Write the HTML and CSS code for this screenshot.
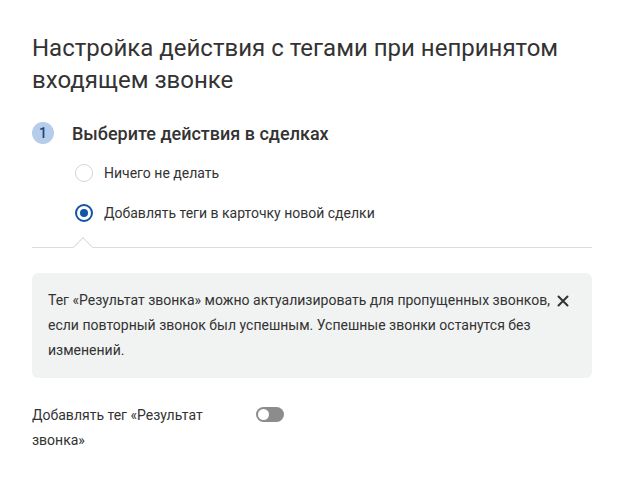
FILE: index.html
```html
<!DOCTYPE html>
<html lang="ru">
<head>
<meta charset="utf-8">
<link rel="stylesheet" href="styles.css">
</head>
<body>
<div class="page">
  <h1 class="title">Настройка действия с тегами при непринятом входящем звонке</h1>
  <div class="step">
    <span class="step-num">1</span>
    <span class="step-label">Выберите действия в сделках</span>
  </div>
  <div class="radios">
    <label class="radio"><span class="radio-dot"></span><span>Ничего не делать</span></label>
    <label class="radio"><span class="radio-dot checked"></span><span>Добавлять теги в карточку новой сделки</span></label>
  </div>
  <div class="divider"><span class="caret"></span></div>
  <div class="info">
    <p class="info-text">Тег «Результат звонка» можно актуализировать для пропущенных звонков, если повторный звонок был успешным. Успешные звонки останутся без изменений.</p>
    <svg class="close" width="12" height="12" viewBox="0 0 12 12"><path d="M1.5 1.5L10.5 10.5M10.5 1.5L1.5 10.5" stroke="#333" stroke-width="2" stroke-linecap="round"/></svg>
  </div>
  <div class="toggle-row">
    <span class="toggle-label">Добавлять тег «Результат звонка»</span>
    <span class="toggle"><span class="knob"></span></span>
  </div>
</div>
</body>
</html>
```
FILE: styles.css
```css
* { box-sizing: border-box; }
body {
  margin: 0;
  background: #fff;
  font-family: Roboto, "Noto Sans", sans-serif;
  color: #333;
}
.page {
  padding: 32px 32px 0 32px;
  width: 624px;
}
.title {
  margin: 0;
  font-size: 24px;
  line-height: 32px;
  font-weight: 400;
  color: #333;
  width: 560px;
}
.step {
  display: flex;
  align-items: center;
  margin-top: 25px;
  height: 24px;
}
.step-num {
  width: 22px;
  height: 22px;
  border-radius: 50%;
  background: #b5cdea;
  color: #1e437a;
  font-size: 14px;
  font-weight: 500;
  display: flex;
  align-items: center;
  justify-content: center;
}
.step-label {
  margin-left: 18px;
  font-size: 18px;
  font-weight: 500;
  color: #333;
}
.radios {
  padding-left: 43px;
  margin-top: 16px;
  display: flex;
  flex-direction: column;
  gap: 16px;
}
.radio {
  display: flex;
  align-items: center;
  font-size: 14px;
  line-height: 24px;
  color: #333;
}
.radio-dot {
  width: 18px;
  height: 18px;
  border-radius: 50%;
  border: 1px solid #d6d6d6;
  margin-right: 11px;
  position: relative;
}
.radio-dot.checked {
  border: 2px solid #1354a5;
}
.radio-dot.checked::after {
  content: "";
  position: absolute;
  left: 3px;
  top: 3px;
  width: 8px;
  height: 8px;
  border-radius: 50%;
  background: #1354a5;
}
.divider {
  position: relative;
  margin-top: 22px;
  height: 1px;
  background: #dcdcdc;
  width: 560px;
}
.caret {
  position: absolute;
  left: 44px;
  top: -7px;
  width: 14px;
  height: 14px;
  background: #fff;
  border-left: 1px solid #dcdcdc;
  border-top: 1px solid #dcdcdc;
  transform: rotate(45deg);
}
.info {
  margin-top: 25px;
  width: 560px;
  background: #f1f2f2;
  border-radius: 6px;
  padding: 15px 23px 15px 16px;
  display: flex;
  align-items: flex-start;
}
.info-text {
  margin: 0;
  font-size: 14px;
  line-height: 25px;
  color: #333;
  flex: 1;
}
.close {
  margin-top: 7px;
  margin-left: 2px;
  flex: none;
}
.toggle-row {
  margin-top: 25px;
  display: flex;
  align-items: flex-start;
}
.toggle-label {
  width: 200px;
  font-size: 14px;
  line-height: 25px;
  color: #333;
}
.toggle {
  margin-left: 24px;
  margin-top: 4px;
  width: 28px;
  height: 15px;
  border-radius: 8px;
  background: #8c8c8c;
  position: relative;
}
.knob {
  position: absolute;
  left: 2px;
  top: 2px;
  width: 11px;
  height: 11px;
  border-radius: 50%;
  background: #fff;
}
```
